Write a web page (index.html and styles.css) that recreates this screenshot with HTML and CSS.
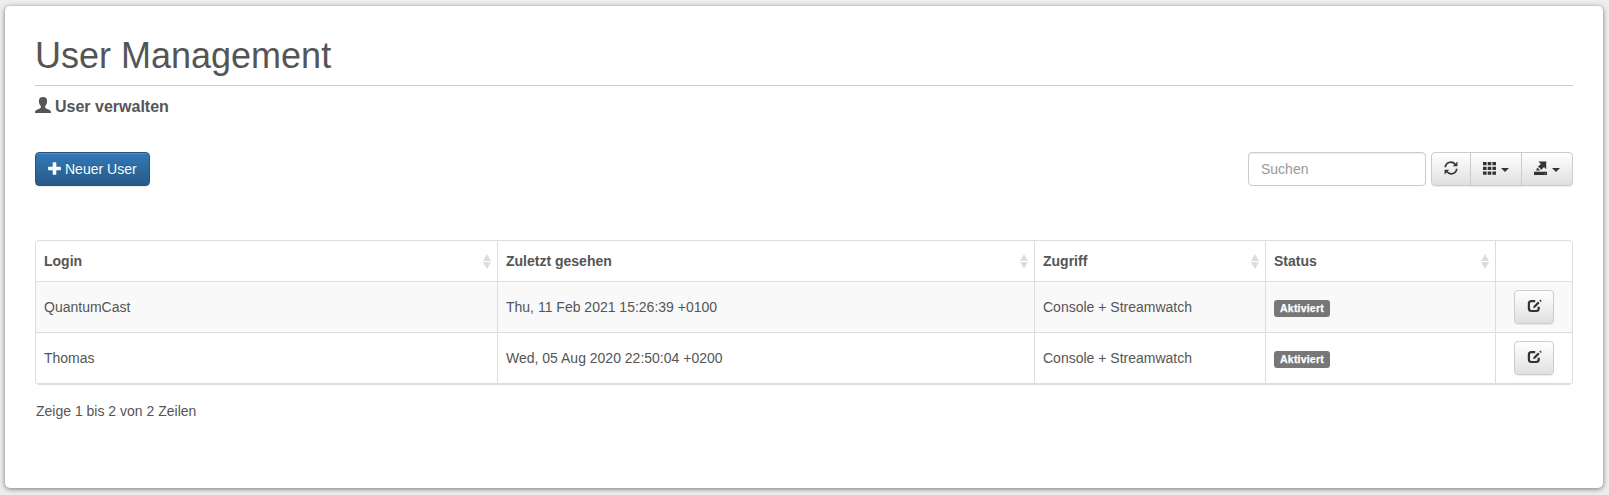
FILE: index.html
```html
<!DOCTYPE html>
<html lang="de">
<head>
<meta charset="utf-8">
<title>User Management</title>
<link rel="stylesheet" href="styles.css">
</head>
<body>
<svg class="sprite" aria-hidden="true">
  <symbol id="edit" viewBox="0 0 15 14">
    <path d="M8.200 2.200H4.300Q1.900 2.200 1.900 4.600v5q0 2.400 2.400 2.400h5q2.400 0 2.400-2.400V7.800" fill="none" stroke="currentColor" stroke-width="2.200"/>
    <path d="M6.200 9.200l.4-2.300 4.400-4.500 1.700 1.700-4.500 4.500zM12.300 1.600l.9-1 1.500 1.500-1 .9z" fill="currentColor"/>
  </symbol>
</svg>
<main class="panel">
  <h1 class="title">User Management</h1>
  <h2 class="subtitle">
    <svg class="icon-user" viewBox="0 0 16 16"><path d="M8 0c2.700 0 4.100 1.600 4.100 4 0 2.200-.7 3.900-1.900 5v1.300c0 .7.400.9 1 1.200l3.400 1.500c.9.500 1.400 1.200 1.400 3H0c0-1.800.5-2.500 1.400-3l3.400-1.500c.6-.3 1-.5 1-1.200V9C4.600 7.900 3.900 6.200 3.900 4c0-2.400 1.400-4 4.100-4z" fill="currentColor"/></svg>
    <span class="subtitle-text">User verwalten</span>
  </h2>
  <div class="toolbar">
    <button class="btn btn-primary">
      <svg class="icon-plus" viewBox="0 0 13 13"><path d="M4.700.8q0-.6.6-.6h2.400q.6 0 .6.600v3.900h4q.6 0 .6.600v2.300q0 .6-.6.600h-4v4q0 .6-.6.600H5.300q-.6 0-.6-.6v-4h-4q-.6 0-.6-.6V5.300q0-.6.6-.6h4z" fill="currentColor"/></svg>
      <span>Neuer User</span>
    </button>
    <div class="tools">
      <input class="search" type="text" placeholder="Suchen">
      <div class="btn-group">
        <button class="btn btn-default" title="Neu laden">
          <svg class="icon" viewBox="0 0 14 14"><path d="M1.300 6.300A5.500 5.500 0 0 1 11 3.200M12.700 7.700A5.500 5.500 0 0 1 3 10.800" fill="none" stroke="currentColor" stroke-width="1.700"/><path d="M13.400.6v4.700H8.800zM.6 13.400V8.700h4.600z" fill="currentColor"/></svg>
        </button>
        <button class="btn btn-default" title="Spalten">
          <svg class="icon" viewBox="0 0 14 14"><path d="M0 1h3.600v3.300H0zM4.700 1h3.600v3.300H4.700zM9.400 1H13v3.300H9.400zM0 5.700h3.600V9H0zM4.700 5.700h3.600V9H4.700zM9.400 5.700H13V9H9.400zM0 10.400h3.600v3.300H0zM4.700 10.400h3.600v3.300H4.700zM9.400 10.400H13v3.300H9.400z" fill="currentColor"/></svg>
          <span class="caret"></span>
        </button>
        <button class="btn btn-default" title="Exportieren">
          <svg class="icon" viewBox="0 0 14 14"><path d="M0 10.700h13V14H0zM4.400.4h7.800v7.800L10 6 7.100 8.900 3.900 5.700l3-2.800z" fill="currentColor"/><path d="M3.200 6.400l3 3H2.200z" fill="currentColor"/><path d="M3.800 5.600l3.200 3.200" stroke="#f0f0f0" stroke-width=".9"/><path d="M10.800 11.900h1.200v.8h-1.200z" fill="#999"/></svg>
          <span class="caret"></span>
        </button>
      </div>
    </div>
  </div>
  <div class="table-box">
    <table class="users">
      <colgroup><col class="c-login"><col class="c-seen"><col class="c-access"><col class="c-status"><col></colgroup>
      <thead>
        <tr>
          <th><div class="head">Login<span class="sort"></span></div></th>
          <th><div class="head">Zuletzt gesehen<span class="sort"></span></div></th>
          <th><div class="head">Zugriff<span class="sort"></span></div></th>
          <th><div class="head">Status<span class="sort"></span></div></th>
          <th></th>
        </tr>
      </thead>
      <tbody>
        <tr>
          <td>QuantumCast</td><td>Thu, 11 Feb 2021 15:26:39 +0100</td><td>Console + Streamwatch</td>
          <td><span class="label">Aktiviert</span></td>
          <td class="action"><button class="btn btn-default btn-edit" title="Bearbeiten"><svg class="icon icon-edit"><use href="#edit"/></svg></button></td>
        </tr>
        <tr>
          <td>Thomas</td><td>Wed, 05 Aug 2020 22:50:04 +0200</td><td>Console + Streamwatch</td>
          <td><span class="label">Aktiviert</span></td>
          <td class="action"><button class="btn btn-default btn-edit" title="Bearbeiten"><svg class="icon icon-edit"><use href="#edit"/></svg></button></td>
        </tr>
      </tbody>
    </table>
  </div>
  <p class="info">Zeige 1 bis 2 von 2 Zeilen</p>
</main>
</body>
</html>
```

FILE: styles.css
```css
* { box-sizing: border-box; }
body {
  margin: 0;
  padding: 6px 6px 7px 5px;
  height: 495px;
  background: #ededed;
  color: #555;
  font: 14px/20px "Liberation Sans", Arial, sans-serif;
}
.sprite { display: none; }
.panel {
  height: 482px;
  padding: 30px;
  background: #fff;
  border-radius: 5px;
  box-shadow: 0 1px 5px rgba(0, 0, 0, .5);
}
.title {
  margin: 0;
  height: 50px;
  border-bottom: 1px solid #ccc;
  font-size: 36px;
  line-height: 40px;
  font-weight: 400;
}
.subtitle {
  display: flex;
  align-items: center;
  gap: 4px;
  margin: 10px 0 0;
  height: 20px;
  font-size: 16px;
  line-height: 20px;
  font-weight: 700;
}
.subtitle-text { padding-top: 1px; }
.icon-user { width: 16px; height: 16px; margin-top: -2px; }
.toolbar { display: flex; justify-content: space-between; margin-top: 36px; }
.tools { display: flex; gap: 5px; }
.btn {
  display: flex;
  align-items: center;
  height: 34px;
  padding: 0 12px;
  border: 1px solid #ccc;
  border-radius: 4px;
  font: inherit;
}
.btn-primary {
  gap: 4px;
  width: 115px;
  border-color: #245580;
  background: linear-gradient(#337ab7, #265a88);
  color: #fff;
  box-shadow: inset 0 1px 0 rgba(255, 255, 255, .15), 0 1px 1px rgba(0, 0, 0, .075);
  text-shadow: 0 -1px 0 rgba(0, 0, 0, .2);
  white-space: nowrap;
}
.icon-plus { flex: none; width: 13px; height: 13px; margin-top: -1px; }
.btn-default {
  background: linear-gradient(#fff, #e0e0e0);
  color: #333;
  box-shadow: inset 0 1px 0 rgba(255, 255, 255, .15), 0 1px 1px rgba(0, 0, 0, .075);
}
.search {
  width: 178px;
  height: 34px;
  padding: 0 12px;
  border: 1px solid #ccc;
  border-radius: 4px;
  font: inherit;
  box-shadow: inset 0 1px 1px rgba(0, 0, 0, .075);
}
.search::placeholder { color: #999; opacity: 1; }
.btn-group { display: flex; }
.btn-group .btn { width: 52px; border-radius: 0; }
.btn-group .btn + .btn { margin-left: -1px; }
.btn-group .btn:first-child { width: 40px; border-radius: 4px 0 0 4px; }
.btn-group .btn:last-child { border-radius: 0 4px 4px 0; }
.icon { flex: none; display: block; width: 14px; height: 14px; margin-top: -2px; }
.icon-edit { width: 15px; }
.caret {
  margin-left: 4px;
  margin-top: 2px;
  border: 4px solid transparent;
  border-top-color: #333;
  border-bottom: 0;
}
.table-box { margin-top: 54px; border: 1px solid #ddd; border-radius: 4px; overflow: hidden; }
.users { width: 100%; table-layout: fixed; border-collapse: separate; border-spacing: 0; }
.c-login { width: 462px; }
.c-seen { width: 537px; }
.c-access { width: 231px; }
.c-status { width: 230px; }
.users th, .users td {
  padding: 0 8px;
  border-right: 1px solid #ddd;
  border-bottom: 1px solid #ddd;
  text-align: left;
  vertical-align: middle;
}
.users th { height: 41px; padding-right: 6px; }
.users td { height: 51px; }
.users th:last-child, .users td:last-child { border-right: 0; }
.users tbody tr:first-child { background: #f9f9f9; }
.head { display: flex; align-items: center; justify-content: space-between; }
.sort { display: grid; gap: 1px; margin-top: 1px; }
.sort::before, .sort::after { content: ""; border: 4px solid transparent; }
.sort::before { border-top: 0; border-bottom: 7px solid #ddd; }
.sort::after { border-bottom: 0; border-top: 7px solid #ddd; }
.label {
  display: block;
  width: 56px;
  height: 17px;
  margin-top: 2px;
  border-radius: 3px;
  background: #777;
  color: #fff;
  font-size: 10.5px;
  line-height: 17px;
  letter-spacing: .2px;
  font-weight: 700;
  text-align: center;
  -webkit-text-stroke: .25px #fff;
}
.btn-edit { width: 40px; margin: 0 auto; }
.info { margin: 16px 0 0 1px; }
```
